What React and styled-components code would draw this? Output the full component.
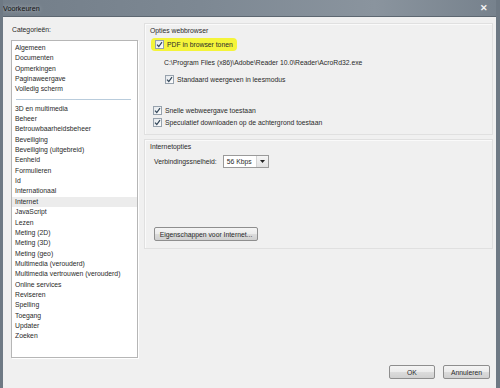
import styled, { createGlobalStyle } from "styled-components";

const GlobalStyle = createGlobalStyle`
  html, body {
    margin: 0;
    padding: 0;
    background: #f0f0f0;
  }
  body {
    font-family: "Liberation Sans", Arial, sans-serif;
  }
`;

const Window = styled.div`
  width: 500px;
  height: 388px;
  display: flex;
  flex-direction: column;
  box-sizing: border-box;
  background: #f0f0f0;
  border-left: 3px solid #6e7984;
  border-right: 4px solid #6e7984;
  overflow: hidden;
  font-size: 6.8px;
  color: #2a2a2a;
`;

const TitleBar = styled.div`
  height: 16px;
  flex-shrink: 0;
  display: flex;
  align-items: center;
  justify-content: space-between;
  margin: 0 -4px 0 -3px;
  padding: 0 12px 0 3px;
  background: linear-gradient(90deg, #737e89 0%, #7d8893 40%, #8a949e 75%, #76818c 100%);
  border-bottom: 1px solid #5d6771;
`;

const Title = styled.span`
  font-size: 7.2px;
  color: #111;
  text-shadow: 0 0 4px rgba(255, 255, 255, 0.6);
`;

const Close = styled.span`
  font-size: 9px;
  color: #f4f4f4;
  font-weight: bold;
`;

const Body = styled.div`
  flex: 1;
  display: flex;
  flex-direction: column;
  padding: 3px 3px 9px 8px;
`;

const Main = styled.div`
  flex: 1;
  display: flex;
  gap: 6px;
`;

const Left = styled.div`
  width: 127px;
  display: flex;
  flex-direction: column;
`;

const Label = styled.div`
  height: ${(p) => p.$h || 20}px;
  line-height: ${(p) => p.$h || 20}px;
  padding-left: ${(p) => p.$indent ?? 1}px;
  flex-shrink: 0;
`;

const ListBox = styled.div`
  height: 318px;
  background: #fff;
  border: 1px solid #b6b6b6;
  box-shadow: 1px 1px 0 #fff;
  padding-top: 2px;
  box-sizing: border-box;
`;

const Item = styled.div`
  height: 10.35px;
  line-height: 10.35px;
  padding-left: 3px;
  white-space: nowrap;
  background: ${(p) => (p.$selected ? "#ececec" : "transparent")};
`;

const Separator = styled.div`
  height: 1px;
  margin: 4px 6px 4px 4px;
  background: #b9ccdc;
`;

const Right = styled.div`
  flex: 1;
  display: flex;
  flex-direction: column;
  gap: 4px;
  padding-top: 3px;
`;

const Group = styled.div`
  height: ${(p) => p.$h}px;
  flex-shrink: 0;
  border: 1px solid #e0e0e0;
  box-shadow: inset 1px 1px 0 #fafafa;
  display: flex;
  flex-direction: column;
  padding: 0 6px 0 5px;
  box-sizing: border-box;
`;

const Row = styled.div`
  display: flex;
  align-items: center;
  gap: 3px;
  height: ${(p) => p.$h || 12}px;
  flex-shrink: 0;
  padding-left: ${(p) => p.$indent || 0}px;
  margin-top: ${(p) => p.$mt || 0}px;
  white-space: nowrap;
`;

const Highlight = styled.span`
  display: inline-flex;
  align-items: center;
  gap: 3px;
  background: #f4f43a;
  border-radius: 4px;
  padding: 2px 4px 2px 4px;
  margin-left: -4px;
`;

const Box = styled.span`
  width: 7px;
  height: 7px;
  border: 1px solid #97a2ad;
  background: linear-gradient(135deg, #e4e8ec, #fdfdfd);
  display: inline-flex;
  align-items: center;
  justify-content: center;
  flex-shrink: 0;
`;

const Select = styled.div`
  width: 46px;
  height: 13px;
  box-sizing: border-box;
  border: 1px solid #9a9a9a;
  background: #fff;
  display: flex;
  align-items: center;
  justify-content: space-between;
  padding-left: 3px;
  margin-left: 3px;
`;

const Arrow = styled.span`
  width: 11px;
  height: 100%;
  border-left: 1px solid #d4d4d4;
  background: linear-gradient(#f6f6f6, #e2e2e2);
  display: flex;
  align-items: center;
  justify-content: center;
`;

const Button = styled.div`
  width: ${(p) => p.$w}px;
  height: 14px;
  box-sizing: border-box;
  border: 1px solid #8e8e8e;
  border-radius: 2px;
  background: linear-gradient(#f4f4f4 0%, #ebebeb 50%, #dcdcdc 51%, #d0d0d0 100%);
  display: flex;
  align-items: center;
  justify-content: center;
  white-space: nowrap;
`;

const Spacer = styled.div`
  flex: ${(p) => (p.$fixed ? `0 0 ${p.$fixed}px` : 1)};
`;

const Footer = styled.div`
  display: flex;
  justify-content: flex-end;
  gap: 8px;
  padding-right: 3px;
`;

const Check = () => (
  <svg width="7" height="7" viewBox="0 0 7 7">
    <path d="M1 3.6 L2.8 5.5 L6 1.2" fill="none" stroke="#33475a" strokeWidth="1.2" />
  </svg>
);

const CheckBox = () => (
  <Box>
    <Check />
  </Box>
);

const topItems = ["Algemeen", "Documenten", "Opmerkingen", "Paginaweergave", "Volledig scherm"];

const items = [
  "3D en multimedia",
  "Beheer",
  "Betrouwbaarheidsbeheer",
  "Beveiliging",
  "Beveiliging (uitgebreid)",
  "Eenheid",
  "Formulieren",
  "Id",
  "Internationaal",
  "Internet",
  "JavaScript",
  "Lezen",
  "Meting (2D)",
  "Meting (3D)",
  "Meting (geo)",
  "Multimedia (verouderd)",
  "Multimedia vertrouwen (verouderd)",
  "Online services",
  "Reviseren",
  "Spelling",
  "Toegang",
  "Updater",
  "Zoeken",
];

const App = () => {
  return (
    <>
      <GlobalStyle />
      <Window>
        <TitleBar>
          <Title>Voorkeuren</Title>
          <Close>✕</Close>
        </TitleBar>
        <Body>
          <Main>
            <Left>
              <Label>Categorieën:</Label>
              <ListBox>
                {topItems.map((t) => (
                  <Item key={t}>{t}</Item>
                ))}
                <Separator />
                {items.map((t) => (
                  <Item key={t} $selected={t === "Internet"}>
                    {t}
                  </Item>
                ))}
              </ListBox>
            </Left>
            <Right>
              <Group $h={112}>
                <Label $h={14} $indent={0}>Opties webbrowser</Label>
                <Row $h={13} $indent={5}>
                  <Highlight>
                    <CheckBox />
                    PDF in browser tonen
                  </Highlight>
                </Row>
                <Row $h={12} $indent={14} $mt={5}>
                  C:\Program Files (x86)\Adobe\Reader 10.0\Reader\AcroRd32.exe
                </Row>
                <Row $h={12} $indent={15} $mt={5}>
                  <CheckBox />
                  Standaard weergeven in leesmodus
                </Row>
                <Row $h={12} $indent={3} $mt={19}>
                  <CheckBox />
                  Snelle webweergave toestaan
                </Row>
                <Row $h={12} $indent={3}>
                  <CheckBox />
                  Speculatief downloaden op de achtergrond toestaan
                </Row>
              </Group>
              <Group $h={110}>
                <Label $h={14} $indent={0}>Internetopties</Label>
                <Row $h={14} $indent={4}>
                  Verbindingssnelheid:
                  <Select>
                    56 Kbps
                    <Arrow>
                      <svg width="5" height="3" viewBox="0 0 5 3">
                        <path d="M0 0 H5 L2.5 3 Z" fill="#222" />
                      </svg>
                    </Arrow>
                  </Select>
                </Row>
                <Spacer />
                <Row $h={14} $indent={4}>
                  <Button $w={104}>Eigenschappen voor Internet...</Button>
                </Row>
                <Spacer $fixed={7} />
              </Group>
            </Right>
          </Main>
          <Footer>
            <Button $w={46}>OK</Button>
            <Button $w={47}>Annuleren</Button>
          </Footer>
        </Body>
      </Window>
    </>
  );
};

export default App;
